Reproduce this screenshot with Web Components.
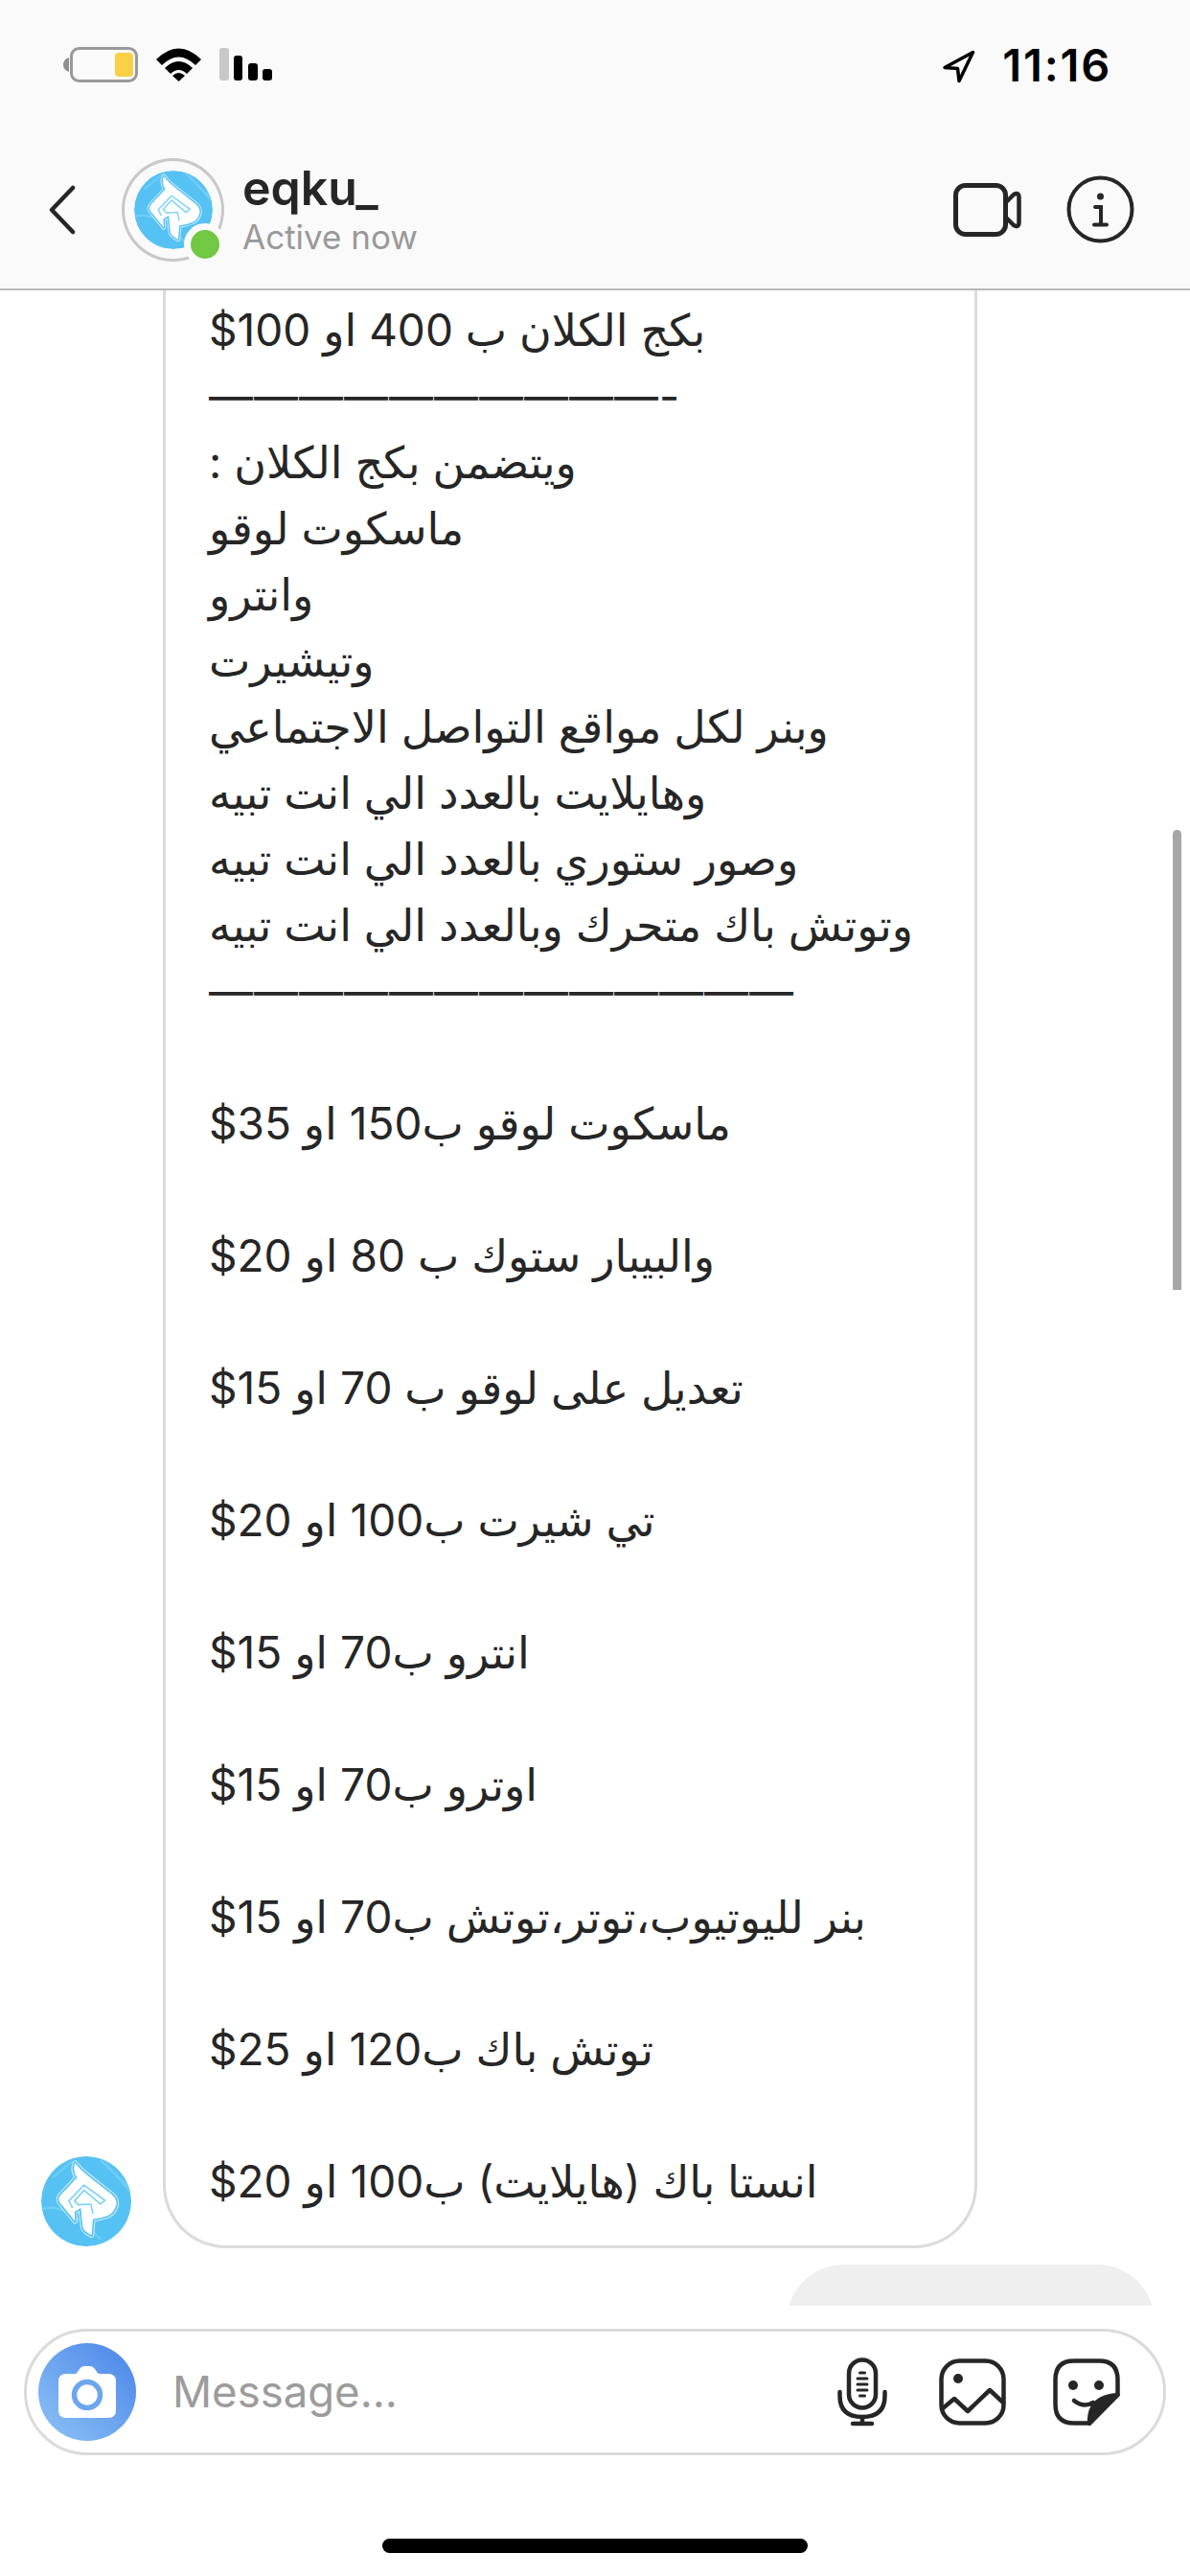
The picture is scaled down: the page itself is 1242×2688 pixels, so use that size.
<!DOCTYPE html>
<html lang="ar">
<head>
<meta charset="utf-8">
<title>eqku_</title>
<style>
  html, body { margin: 0; padding: 0; background: #fff; }
</style>
</head>
<body>
<chat-screen>
  <status-bar slot="top"></status-bar>
  <chat-header slot="top" name="eqku_" status="Active now"></chat-header>

  <message-bubble slot="messages">
    <message-line>بكج الكلان ب 400 او 100$</message-line>
    <message-line ltr>——————————-</message-line>
    <message-line>ويتضمن بكج الكلان :</message-line>
    <message-line>ماسكوت لوقو</message-line>
    <message-line>وانترو</message-line>
    <message-line>وتيشيرت</message-line>
    <message-line>وبنر لكل مواقع التواصل الاجتماعي</message-line>
    <message-line>وهايلايت بالعدد الي انت تبيه</message-line>
    <message-line>وصور ستوري بالعدد الي انت تبيه</message-line>
    <message-line>وتوتش باك متحرك وبالعدد الي انت تبيه</message-line>
    <message-line ltr>—————————————</message-line>
    <message-line></message-line>
    <message-line>ماسكوت لوقو ب150 او 35$</message-line>
    <message-line></message-line>
    <message-line>والبيبار ستوك ب 80 او 20$</message-line>
    <message-line></message-line>
    <message-line>تعديل على لوقو ب 70 او 15$</message-line>
    <message-line></message-line>
    <message-line>تي شيرت ب100 او 20$</message-line>
    <message-line></message-line>
    <message-line>انترو ب70 او 15$</message-line>
    <message-line></message-line>
    <message-line>اوترو ب70 او 15$</message-line>
    <message-line></message-line>
    <message-line>بنر لليوتيوب،توتر،توتش ب70 او 15$</message-line>
    <message-line></message-line>
    <message-line>توتش باك ب120 او 25$</message-line>
    <message-line></message-line>
    <message-line>انستا باك (هايلايت) ب100 او 20$</message-line>
  </message-bubble>
  <outgoing-bubble slot="messages"></outgoing-bubble>

  <composer-bar slot="bottom" placeholder="Message..."></composer-bar>
  <home-indicator slot="bottom"></home-indicator>
</chat-screen>

<script>
const FONT = `Inter, "DejaVu Sans", sans-serif`;

// logo is shared by the header and the message avatar
const LOGO_SHAPE = "M130 44 Q120 68 136 90 L82 148 Q74 160 84 172 L130 228 L128 198 L148 186 L154 244 Q156 256 166 262 L182 272 L186 222 L214 216 Q252 210 260 176 Q262 158 246 144 L170 84 Q146 66 130 44 Z";
const logoSvg = `
<svg viewBox="23 23 284 284" width="100%" height="100%" style="display:block">
  <circle cx="165" cy="165" r="142" fill="#56c2f3"/>
  <path d="M26 190 C90 168 150 225 210 285 M60 90 L120 40 M210 35 L300 120 M225 45 L305 135" fill="none" stroke="#6fcdf6" stroke-width="7"/>
  <path d="${LOGO_SHAPE}" fill="none" stroke="#d4f1fc" stroke-width="16" stroke-linejoin="round"/>
  <path d="${LOGO_SHAPE}" fill="none" stroke="#56c2f3" stroke-width="10" stroke-linejoin="round"/>
  <path d="${LOGO_SHAPE}" fill="#fff"/>
  <path d="M122 186 L110 164 L158 114 L224 162 L210 174 L158 130 L128 164 L140 176 L180 174 L186 204" fill="none" stroke="#7ed3f7" stroke-width="5" stroke-linejoin="round"/>
</svg>`;

class ChatScreen extends HTMLElement {
  constructor() {
    super();
    this.attachShadow({ mode: "open" }).innerHTML = `
<style>
  :host { display: flex; flex-direction: column; width: 1242px; height: 2688px; background: #fff; overflow: hidden; font-family: ${FONT}; color: #262626; }
  .top { background: #fafafa; border-bottom: 2px solid #b8b8b8; }
  .messages { position: relative; flex: 1; min-height: 0; overflow: hidden; display: flex; flex-direction: column; }
  .scroll-thumb { position: absolute; left: 1224px; top: 563px; width: 9px; height: 480px; border-radius: 5px 5px 0 0; background: #a6a6a6; }
  .bottom { background: #fff; }
</style>
<div class="top"><slot name="top"></slot></div>
<div class="messages"><slot name="messages"></slot><div class="scroll-thumb"></div></div>
<div class="bottom"><slot name="bottom"></slot></div>`;
  }
}
customElements.define("chat-screen", ChatScreen);

class StatusBar extends HTMLElement {
  constructor() {
    super();
    this.attachShadow({ mode: "open" }).innerHTML = `
<style>
  :host { display: flex; justify-content: space-between; box-sizing: border-box; height: 136px; padding: 49px 82px 0 66px; }
  .left, .right { display: flex; align-items: flex-start; }
  .left svg + svg { margin-left: 19px; }
  svg { display: block; }
  .time { margin-left: 28px; font: 600 47px/37px Inter, sans-serif; letter-spacing: 1.8px; color: #000; }
  .arrow { margin-top: 3px; }
</style>
<div class="left">
  <svg width="78" height="37" viewBox="0 0 78 37">
    <path d="M6 11 Q0 13 0 18.500 Q0 24 6 26 Z" fill="#8e8e8e"/>
    <rect x="8.500" y="1.500" width="68" height="34" rx="8" fill="none" stroke="#999" stroke-width="3"/>
    <rect x="54" y="6" width="19" height="25" rx="4" fill="#f9cf45"/>
  </svg>
  <svg width="47" height="36" viewBox="0 0 47 36">
    <path d="M0 13 Q23.500 -10 47 13 L41 19 Q23.500 2 6 19 Z" fill="#000"/>
    <path d="M9 22 Q23.500 8 38 22 L32 28 Q23.500 20 15 28 Z" fill="#000"/>
    <path d="M17 30 Q23.500 24 30 30 L23.500 36 Z" fill="#000"/>
  </svg>
  <svg width="55" height="36" viewBox="0 0 55 36">
    <rect x="0" y="1" width="10" height="34" rx="3" fill="#c8c8c8"/>
    <rect x="15" y="9" width="9" height="26" rx="3" fill="#000"/>
    <rect x="30" y="17" width="10" height="18" rx="3" fill="#000"/>
    <rect x="45" y="23" width="10" height="12" rx="3" fill="#000"/>
  </svg>
</div>
<div class="right">
  <svg class="arrow" width="35" height="35" viewBox="0 0 35 35">
    <path d="M32.500 2.500 L3 18.500 L16.500 19.500 L18 32.500 Z" fill="none" stroke="#000" stroke-width="3.500" stroke-linejoin="round"/>
  </svg>
  <span class="time">11:16</span>
</div>`;
  }
}
customElements.define("status-bar", StatusBar);

class BrandAvatar extends HTMLElement {
  constructor() {
    super();
    this.attachShadow({ mode: "open" }).innerHTML = `
<style>
  :host { display: block; border-radius: 50%; overflow: hidden; flex: none; }
</style>
${logoSvg}`;
  }
}
customElements.define("brand-avatar", BrandAvatar);

class ChatHeader extends HTMLElement {
  constructor() {
    super();
    const name = this.getAttribute("name");
    const status = this.getAttribute("status");
    this.attachShadow({ mode: "open" }).innerHTML = `
<style>
  :host { display: flex; align-items: center; box-sizing: border-box; height: 165px; padding: 0 58px 0 51px; }
  svg { display: block; flex: none; }
  .ring { position: relative; flex: none; box-sizing: border-box; width: 107px; height: 108px; margin-left: 48px; border: 3px solid #c8c8c8; border-radius: 50%; display: flex; align-items: center; justify-content: center; }
  brand-avatar { width: 82px; height: 82px; }
  .dot { position: absolute; left: 62px; top: 65px; width: 30px; height: 30px; border-radius: 50%; background: #70c843; border: 7px solid #fafafa; }
  .who { flex: 1; margin-left: 19px; }
  .name { font: 600 50px/56px Inter, sans-serif; color: #262626; margin-top: -1px; }
  .status { font: 400 35px/44px Inter, sans-serif; color: #999; margin-top: 1px; }
  .info { margin-left: 47px; }
</style>
<svg width="28" height="52" viewBox="0 0 28 52"><path d="M25 3 L3 26 L25 49" fill="none" stroke="#262626" stroke-width="4.500" stroke-linecap="round" stroke-linejoin="round"/></svg>
<div class="ring"><brand-avatar></brand-avatar><span class="dot"></span></div>
<div class="who"><div class="name">${name}</div><div class="status">${status}</div></div>
<svg width="71" height="56" viewBox="0 0 71 56">
  <rect x="2.500" y="2.500" width="52" height="51" rx="10" fill="none" stroke="#262626" stroke-width="5"/>
  <path d="M55 20 L63 12 Q68.500 9 68.500 15 L68.500 41 Q68.500 47 63 44 L55 36" fill="none" stroke="#262626" stroke-width="4.500" stroke-linejoin="round"/>
</svg>
<svg class="info" width="71" height="71" viewBox="0 0 71 71">
  <circle cx="35.500" cy="35.500" r="33" fill="none" stroke="#262626" stroke-width="4"/>
  <circle cx="35.500" cy="22" r="3.500" fill="#262626"/>
  <path d="M30 33 H36 V50 M29 51.500 H42" fill="none" stroke="#262626" stroke-width="4" stroke-linecap="round"/>
</svg>`;
  }
}
customElements.define("chat-header", ChatHeader);

class MessageBubble extends HTMLElement {
  constructor() {
    super();
    this.attachShadow({ mode: "open" }).innerHTML = `
<style>
  :host { display: flex; align-items: flex-end; padding-left: 43px; flex: none; }
  brand-avatar { width: 94px; height: 94px; margin-right: 33px; margin-bottom: 2px; }
  .bubble { box-sizing: border-box; width: 850px; padding: 7px 40px 32px 45px; border: 3px solid #dbdbdb; border-top: 0; border-radius: 0 0 66px 66px; }
</style>
<brand-avatar></brand-avatar>
<div class="bubble"><slot></slot></div>`;
  }
}
customElements.define("message-bubble", MessageBubble);

class MessageLine extends HTMLElement {
  constructor() {
    super();
    this.attachShadow({ mode: "open" }).innerHTML = `
<style>
  :host { display: block; height: 69px; font: 400 46px/69px ${FONT}; color: #262626; text-align: left; white-space: nowrap; }
  :host([ltr]) { letter-spacing: 1px; }
</style>
<slot></slot>`;
    this.dir = this.hasAttribute("ltr") ? "ltr" : "rtl";
  }
}
customElements.define("message-line", MessageLine);

class OutgoingBubble extends HTMLElement {
  constructor() {
    super();
    this.attachShadow({ mode: "open" }).innerHTML = `
<style>
  :host { display: block; flex: none; box-sizing: border-box; width: 384px; height: 130px; margin: 17px 37px 0 auto; border-radius: 60px; background: #efefef; }
</style>`;
  }
}
customElements.define("outgoing-bubble", OutgoingBubble);

class ComposerBar extends HTMLElement {
  constructor() {
    super();
    const placeholder = this.getAttribute("placeholder");
    this.attachShadow({ mode: "open" }).innerHTML = `
<style>
  :host { display: block; padding: 24px 25px 0; }
  .field { display: flex; align-items: center; box-sizing: border-box; height: 132px; padding: 0 45px 0 12px; border: 3px solid #dbdbdb; border-radius: 66px; }
  svg { display: block; flex: none; }
  .cam { flex: none; width: 102px; height: 102px; border-radius: 50%; background: linear-gradient(45deg, #8dc3f6, #4a84e8); display: flex; align-items: center; justify-content: center; }
  .text { flex: 1; margin-left: 38px; font: 400 45.500px/56px Inter, sans-serif; color: #9c9c9c; }
  .mic { margin-right: 54px; }
  .gallery { margin-right: 49px; }
</style>
<div class="field">
  <div class="cam">
    <svg width="60" height="54" viewBox="0 0 60 54">
      <path d="M8 8 H17 Q19 8 20 6 L22 3 Q24 0 27 0 H33 Q36 0 38 3 L40 6 Q41 8 43 8 H52 Q60 8 60 16 V46 Q60 54 52 54 H8 Q0 54 0 46 V16 Q0 8 8 8 Z" fill="#fff"/>
      <circle cx="30" cy="30" r="13.500" fill="none" stroke="#6ea6ee" stroke-width="5.500"/>
    </svg>
  </div>
  <span class="text">${placeholder}</span>
  <svg class="mic" width="52" height="72" viewBox="0 0 52 72" fill="none" stroke="#262626" stroke-width="4.500" stroke-linecap="round">
    <rect x="12" y="2.500" width="28" height="50" rx="14"/>
    <path d="M2.500 36 V40 Q2.500 62 26 62 Q49.500 62 49.500 40 V36"/>
    <path d="M26 62 V69 M16 69 H36"/>
    <path d="M23.500 16 H28.500 M21 22 H31 M21 28 H31 M21 34 H31 M23.500 40 H28.500" stroke-width="3"/>
  </svg>
  <svg class="gallery" width="70" height="70" viewBox="0 0 70 70" fill="none" stroke="#262626" stroke-width="4.500" stroke-linecap="round" stroke-linejoin="round">
    <rect x="2.500" y="2.500" width="65" height="65" rx="19"/>
    <circle cx="20" cy="21" r="5" fill="#262626" stroke="none"/>
    <path d="M4 52 L16 42 L30 55 L53 33 L67 46"/>
  </svg>
  <svg width="70" height="70" viewBox="0 0 70 70" fill="none" stroke="#262626" stroke-width="4.500" stroke-linecap="round" stroke-linejoin="round">
    <path d="M22 2.500 H48 Q67.500 2.500 67.500 22 V38 L38 67.500 H22 Q2.500 67.500 2.500 48 V22 Q2.500 2.500 22 2.500 Z"/>
    <circle cx="21" cy="28" r="5" fill="#262626" stroke="none"/>
    <circle cx="48" cy="28" r="5" fill="#262626" stroke="none"/>
    <path d="M22 44 Q32 52 42 46"/>
    <path d="M38 68 Q37 40 67.500 38 Z" fill="#262626"/>
  </svg>
</div>`;
  }
}
customElements.define("composer-bar", ComposerBar);

class HomeIndicator extends HTMLElement {
  constructor() {
    super();
    this.attachShadow({ mode: "open" }).innerHTML = `
<style>
  :host { display: flex; justify-content: center; box-sizing: border-box; height: 126px; padding-top: 87px; }
  .bar { width: 444px; height: 15px; border-radius: 8px; background: #000; }
</style>
<div class="bar"></div>`;
  }
}
customElements.define("home-indicator", HomeIndicator);
</script>
</body>
</html>
